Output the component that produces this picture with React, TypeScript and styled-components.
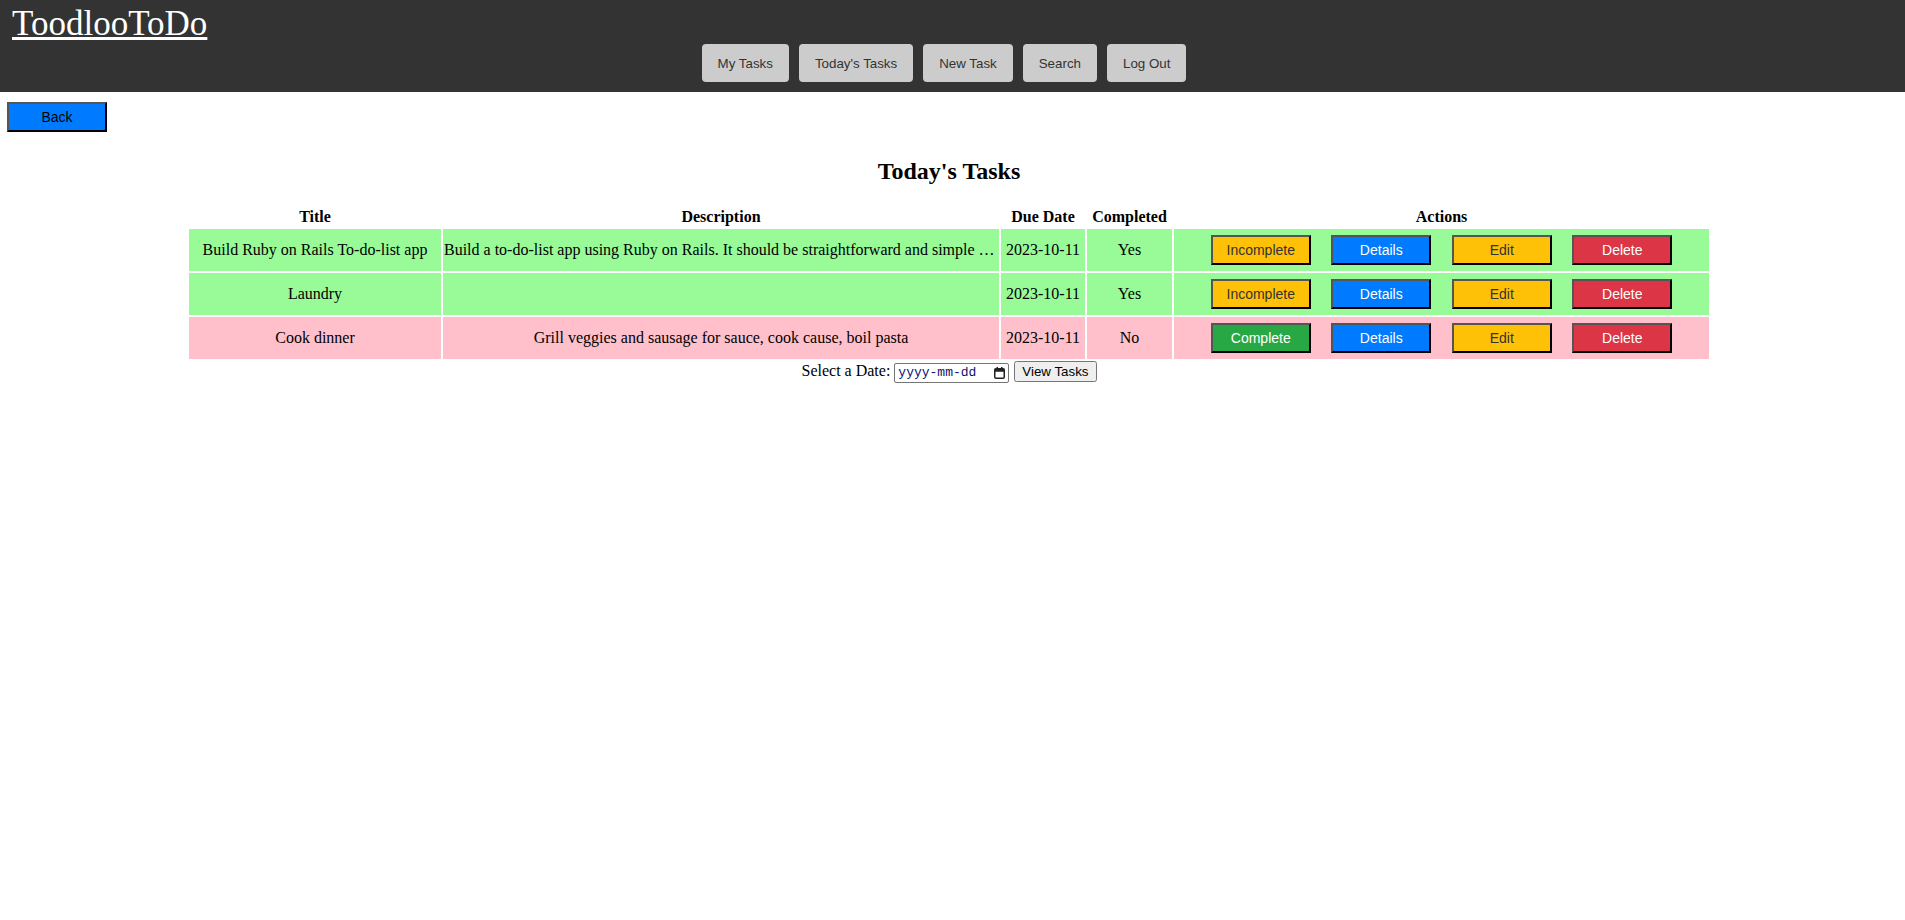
import React from 'react'
import styled, { createGlobalStyle } from 'styled-components'

const GlobalStyle = createGlobalStyle`
  body {
    margin: 0;
    background: #fff;
    color: #000;
    font-family: 'Liberation Serif', 'Times New Roman', serif;
    font-size: 16px;
  }
`

const Header = styled.header`
  background: #333;
  padding: 4px 12px 10px;
`

const Brand = styled.a`
  display: block;
  width: fit-content;
  color: #fff;
  font-size: 35px;
  text-decoration: underline;
  cursor: pointer;
`

const Nav = styled.nav`
  display: flex;
  justify-content: center;
  gap: 10px;
  padding-right: 17px;
`

const NavButton = styled.button`
  height: 38px;
  padding: 0 16px;
  border: none;
  border-radius: 4px;
  background: #ccc;
  color: #333;
  font-family: 'Liberation Sans', Arial, sans-serif;
  font-size: 13.33px;
  cursor: pointer;
`

const Main = styled.main`
  padding: 10px 7px 0 0;
`

type Variant = 'back' | 'warning' | 'info' | 'danger' | 'success'

const palette: Record<Variant, { bg: string; fg: string }> = {
  back: { bg: '#007bff', fg: '#000' },
  warning: { bg: '#ffc107', fg: '#333' },
  info: { bg: '#007bff', fg: '#fff' },
  danger: { bg: '#dc3545', fg: '#fff' },
  success: { bg: '#28a745', fg: '#fff' }
}

const BlockButton = styled.button<{ $variant: Variant }>`
  width: 100px;
  height: 30px;
  padding: 0;
  border: 2px solid;
  border-color: #555 #000 #000 #555;
  background: ${(p) => palette[p.$variant].bg};
  color: ${(p) => palette[p.$variant].fg};
  font-family: 'Liberation Sans', Arial, sans-serif;
  font-size: 14px;
  cursor: pointer;
`

const BackButton = styled(BlockButton)`
  display: block;
  margin-left: 7px;
`

const ActionButton = styled(BlockButton)`
  margin: 5px 0;
`

const Heading = styled.h2`
  margin: 26px 0 20px;
  text-align: center;
  font-size: 24px;
  font-weight: bold;
`

const Table = styled.table`
  width: 80vw;
  margin: 0 auto;
  border-spacing: 2px;
  table-layout: fixed;
`

const Th = styled.th<{ $w: number }>`
  box-sizing: border-box;
  width: ${(p) => p.$w}px;
  padding: 1px;
  font-weight: bold;
  text-align: center;
`

const Row = styled.tr<{ $done: boolean }>`
  background: ${(p) => (p.$done ? '#98fb98' : '#ffc0cb')};
`

const Td = styled.td`
  padding: 1px;
  text-align: center;
  vertical-align: middle;
`

const DescTd = styled(Td)`
  white-space: nowrap;
  overflow: hidden;
  text-overflow: ellipsis;
`

const ActionGroup = styled.div`
  display: flex;
  justify-content: center;
  gap: 20.5px;
`

const DateForm = styled.form`
  text-align: center;
`

const DateField = styled.span`
  display: inline-flex;
  align-items: center;
  justify-content: space-between;
  box-sizing: border-box;
  width: 115px;
  height: 20px;
  margin-left: 4px;
  padding: 0 3px 0 3px;
  border: 1px solid #767676;
  border-radius: 2px;
  background: #fff;
  color: #10106e;
  font-family: 'Liberation Mono', monospace;
  font-size: 13px;
  cursor: text;
`

const SubmitButton = styled.button`
  margin-left: 5px;
  font-family: 'Liberation Sans', Arial, sans-serif;
  font-size: 13.33px;
`

interface Task {
  title: string
  description: string
  due: string
  done: boolean
}

const tasks: Task[] = [
  {
    title: 'Build Ruby on Rails To-do-list app',
    description:
      'Build a to-do-list app using Ruby on Rails. It should be straightforward and simple to use, with a clean layout and easy navigation.',
    due: '2023-10-11',
    done: true
  },
  { title: 'Laundry', description: '', due: '2023-10-11', done: true },
  {
    title: 'Cook dinner',
    description: 'Grill veggies and sausage for sauce, cook cause, boil pasta',
    due: '2023-10-11',
    done: false
  }
]

const navItems = ['My Tasks', "Today's Tasks", 'New Task', 'Search', 'Log Out']

const CalendarIcon = () => (
  <svg width="11" height="12" viewBox="0 0 11 12" aria-hidden="true">
    <rect x="0.75" y="1.75" width="9.5" height="9.5" rx="1.2" fill="none" stroke="#222" strokeWidth="1.5" />
    <rect x="0.75" y="1.75" width="9.5" height="3" fill="#222" />
    <rect x="2.5" y="0" width="1.5" height="2.5" fill="#222" />
    <rect x="7" y="0" width="1.5" height="2.5" fill="#222" />
  </svg>
)

export default function App() {
  return (
    <>
      <GlobalStyle />
      <Header>
        <Brand>ToodlooToDo</Brand>
        <Nav>
          {navItems.map((item) => (
            <NavButton key={item}>{item}</NavButton>
          ))}
        </Nav>
      </Header>

      <Main>
        <BackButton $variant="back">Back</BackButton>
        <Heading>Today's Tasks</Heading>

        <Table>
          <thead>
            <tr>
              <Th $w={252}>Title</Th>
              <Th $w={556}>Description</Th>
              <Th $w={84}>Due Date</Th>
              <Th $w={85}>Completed</Th>
              <Th $w={535}>Actions</Th>
            </tr>
          </thead>
          <tbody>
            {tasks.map((task) => (
              <Row key={task.title} $done={task.done}>
                <Td>{task.title}</Td>
                <DescTd>{task.description}</DescTd>
                <Td>{task.due}</Td>
                <Td>{task.done ? 'Yes' : 'No'}</Td>
                <Td>
                  <ActionGroup>
                    {task.done ? (
                      <ActionButton $variant="warning">Incomplete</ActionButton>
                    ) : (
                      <ActionButton $variant="success">Complete</ActionButton>
                    )}
                    <ActionButton $variant="info">Details</ActionButton>
                    <ActionButton $variant="warning">Edit</ActionButton>
                    <ActionButton $variant="danger">Delete</ActionButton>
                  </ActionGroup>
                </Td>
              </Row>
            ))}
          </tbody>
        </Table>

        <DateForm onSubmit={(e) => e.preventDefault()}>
          Select a Date:
          <DateField role="textbox" aria-label="Select a Date">
            <span>yyyy-mm-dd</span>
            <CalendarIcon />
          </DateField>
          <SubmitButton type="submit">View Tasks</SubmitButton>
        </DateForm>
      </Main>
    </>
  )
}
